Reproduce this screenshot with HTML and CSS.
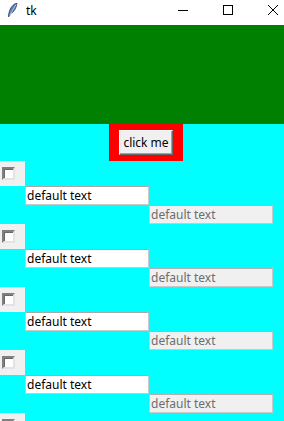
FILE: index.html
```html
<!DOCTYPE html>
<html lang="en">
<head>
  <meta charset="UTF-8">
  <title>tk</title>
  <link rel="stylesheet" href="styles.css">
</head>
<body>
  <div class="titlebar">
    <svg class="feather" width="10" height="14" viewBox="0 0 10 14">
      <path d="M9 0 C5 1 2 5 1 10 L0 14 L1.5 13 C2 11 3 10 5 9 C7 7 8.5 4 9 0 Z" fill="#5a7db0" stroke="#24406e" stroke-width="0.8"/>
      <path d="M8 1.5 L1.5 12.5" stroke="#dde6f3" stroke-width="0.7"/>
    </svg>
    <span class="title">tk</span>
    <div class="controls">
      <svg width="12" height="12" viewBox="0 0 12 12"><path d="M1 6.5 H11" stroke="#000" stroke-width="1"/></svg>
      <svg width="12" height="12" viewBox="0 0 12 12"><rect x="1.5" y="1.5" width="9" height="9" fill="none" stroke="#000" stroke-width="1"/></svg>
      <svg width="12" height="12" viewBox="0 0 12 12"><path d="M1 1 L11 11 M11 1 L1 11" stroke="#000" stroke-width="1"/></svg>
    </div>
  </div>

  <div class="green"></div>

  <div class="btn-row">
    <div class="red-frame">
      <button class="tk-btn" type="button">click me</button>
    </div>
  </div>

  <div id="rows"></div>

  <script>
    const rows = document.getElementById('rows');
    for (let i = 0; i < 5; i++) {
      const row = document.createElement('div');
      row.className = 'row';
      row.innerHTML =
        '<div class="check-frame"><span class="check"></span></div>' +
        '<input class="entry" type="text" value="default text">' +
        '<input class="entry entry-off" type="text" value="default text" disabled>';
      rows.appendChild(row);
    }
  </script>
</body>
</html>
```

FILE: styles.css
```css
html, body {
  margin: 0;
  padding: 0;
}

body {
  width: 284px;
  height: 421px;
  overflow: hidden;
  background-color: #00ffff;
  font-family: "Noto Sans", "Open Sans", sans-serif;
  font-size: 12px;
}

.titlebar {
  height: 25px;
  background-color: #fff;
  display: flex;
  align-items: center;
}

.feather {
  margin-left: 8px;
  margin-top: -6px;
}

.title {
  margin-left: 8px;
  margin-top: -5px;
  font-size: 12px;
  color: #000;
}

.controls {
  margin-left: auto;
  margin-top: -6px;
  display: flex;
  gap: 33px;
  padding-right: 5px;
}

.green {
  height: 99px;
  background-color: #008000;
}

.btn-row {
  display: flex;
  justify-content: center;
  padding-left: 8px;
}

.red-frame {
  background-color: #ff0000;
  padding: 6px 10px 6px 10px;
  width: 54px;
  height: 25px;
}

.tk-btn {
  display: block;
  width: 54px;
  height: 25px;
  padding: 0;
  margin: 0;
  background-color: #f0f0f0;
  border: 1px solid;
  border-color: #fff #696969 #696969 #fff;
  box-shadow: inset -1px -1px 0 #a0a0a0;
  font-family: "Noto Sans", "Open Sans", sans-serif;
  font-size: 12px;
  color: #000;
}

.row {
  display: flex;
  flex-direction: column;
  height: 63px;
}

.check-frame {
  width: 25px;
  height: 25px;
  background-color: #f0f0f0;
  display: flex;
  align-items: center;
}

.check {
  display: block;
  width: 9px;
  height: 9px;
  margin-left: 2px;
  background-color: #fff;
  border: 2px solid;
  border-color: #808080 #e3e3e3 #e3e3e3 #808080;
  box-shadow: inset 1px 1px 0 #696969;
}

.entry {
  box-sizing: border-box;
  width: 124px;
  height: 19px;
  margin: 0 0 0 25px;
  padding: 0 1px;
  border: 1px solid #c9c9c9;
  border-top-color: #a8a8a8;
  background-color: #fff;
  font-family: "Noto Sans", "Open Sans", sans-serif;
  font-size: 12px;
  color: #000;
  outline: none;
}

.entry-off {
  margin-left: 149px;
  background-color: #f0f0f0;
  color: #6d6d6d;
  border-color: #c9c9c9;
  border-top-color: #b0b0b0;
}
```
